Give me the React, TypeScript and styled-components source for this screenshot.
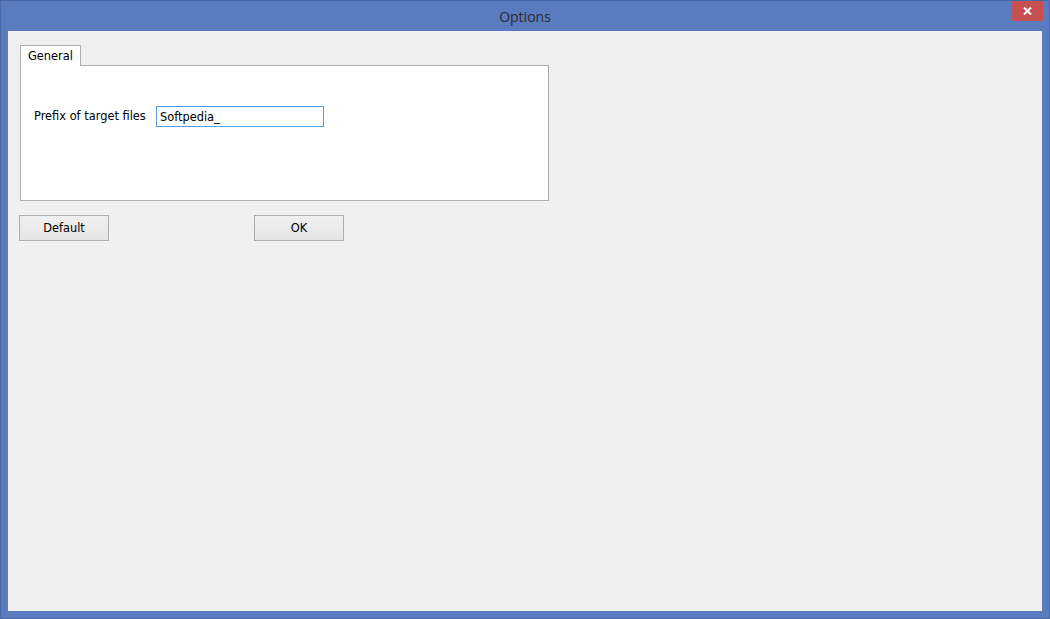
import React from "react";
import styled, { createGlobalStyle } from "styled-components";

const Global = createGlobalStyle`
  html, body { margin: 0; padding: 0; width: 1050px; height: 619px; overflow: hidden; }
  #root { width: 1050px; height: 619px; }
`;

const Frame = styled.div`
  box-sizing: border-box;
  width: 1050px;
  height: 619px;
  background: #5a7bbf;
  border: 1px solid #4a69a8;
  display: flex;
  flex-direction: column;
`;

const TitleBar = styled.div`
  position: relative;
  height: 30px;
  flex: none;
  display: flex;
  align-items: center;
  justify-content: center;
  font-family: "Open Sans", "Noto Sans", sans-serif;
  font-size: 14px;
  color: #2a2a2a;
`;

const CloseButton = styled.div`
  position: absolute;
  top: 0;
  right: 6px;
  width: 31px;
  height: 20px;
  background: #c75050;
  display: flex;
  align-items: center;
  justify-content: center;
`;

const Client = styled.div`
  flex: 1;
  margin: 0 7px 7px 7px;
  background: #f0f0f0;
  padding: 14px 0 0 0;
  display: flex;
  flex-direction: column;
  align-items: flex-start;
  font-family: "DejaVu Sans", "Liberation Sans", sans-serif;
  font-size: 11.4px;
  color: #000;
`;

const TabControl = styled.div`
  margin-left: 12px;
  display: flex;
  flex-direction: column;
`;

const TabStrip = styled.div`
  display: flex;
  height: 20px;
`;

const Tab = styled.div`
  box-sizing: border-box;
  width: 61px;
  height: 21px;
  background: #fff;
  border: 1px solid #adadad;
  border-bottom: none;
  position: relative;
  z-index: 1;
  padding: 3px 0 0 7px;
`;

const TabPanel = styled.div`
  box-sizing: border-box;
  width: 529px;
  height: 136px;
  background: #fff;
  border: 1px solid #adadad;
  padding: 40px 0 0 13px;
`;

const FieldRow = styled.div`
  display: flex;
  align-items: center;
  gap: 9px;
`;

const Label = styled.span`
  position: relative;
  top: -1px;
  width: 113px;
  white-space: nowrap;
`;

const Input = styled.div`
  box-sizing: border-box;
  width: 168px;
  height: 21px;
  border: 1px solid #569de5;
  background: #fff;
  padding: 3px 0 0 3px;
`;

const ButtonRow = styled.div`
  display: flex;
  margin-top: 14px;
  margin-left: 11px;
  gap: 145px;
`;

const Button = styled.div`
  box-sizing: border-box;
  width: 90px;
  height: 26px;
  border: 1px solid #adadad;
  background: linear-gradient(#f0f0f0, #e5e5e5);
  display: flex;
  align-items: center;
  justify-content: center;
`;

export default function App() {
  return (
    <>
      <Global />
      <Frame>
        <TitleBar>
          Options
          <CloseButton>
            <svg width="9" height="8" viewBox="0 0 9 8">
              <path d="M1 0.5 L8 7.5 M8 0.5 L1 7.5" stroke="#fff" strokeWidth="2" />
            </svg>
          </CloseButton>
        </TitleBar>
        <Client>
          <TabControl>
            <TabStrip>
              <Tab>General</Tab>
            </TabStrip>
            <TabPanel>
              <FieldRow>
                <Label>Prefix of target files</Label>
                <Input>Softpedia_</Input>
              </FieldRow>
            </TabPanel>
          </TabControl>
          <ButtonRow>
            <Button>Default</Button>
            <Button>OK</Button>
          </ButtonRow>
        </Client>
      </Frame>
    </>
  );
}
